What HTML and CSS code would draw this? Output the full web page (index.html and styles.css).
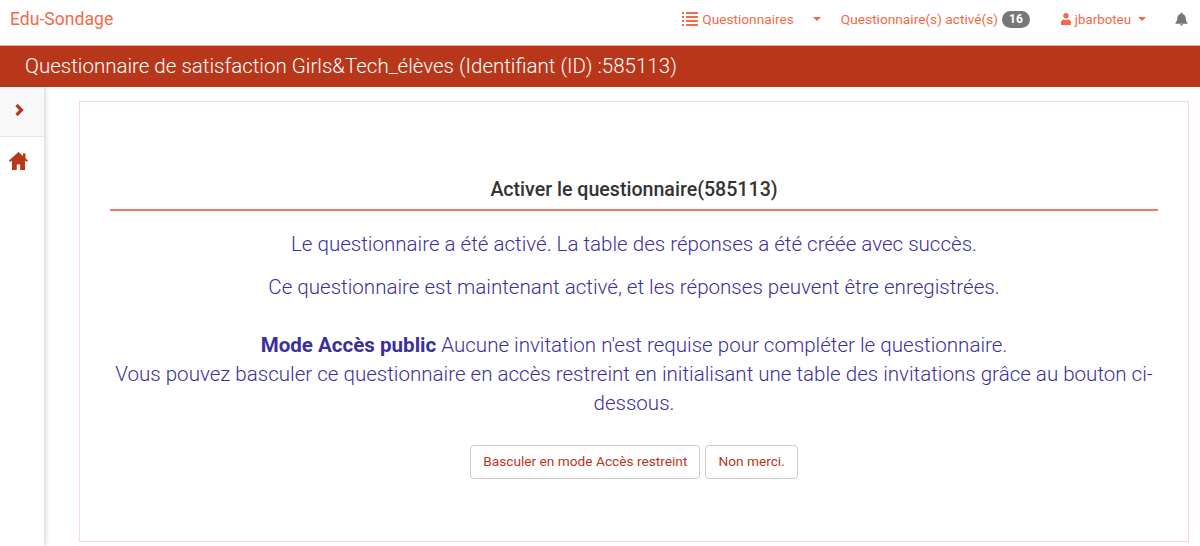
FILE: index.html
```html
<!DOCTYPE html>
<html lang="fr">
<head>
  <meta charset="UTF-8">
  <title>Edu-Sondage</title>
  <link rel="stylesheet" href="styles.css">
</head>
<body>
  <nav class="navbar">
    <a href="#" class="nav-logo">Edu-Sondage</a>
    <ul class="nav-links">
      <li class="nav-quest">
        <a href="#" class="nav-link">
          <svg class="icon-list" viewBox="0 0 16 14" width="16" height="14"><path d="M0 0h2v2H0zM4 0h12v2H4zM0 4h2v2H0zM4 4h12v2H4zM0 8h2v2H0zM4 8h12v2H4zM0 12h2v2H0zM4 12h12v2H4z" fill="currentColor"/></svg>
          Questionnaires
        </a>
        <span class="caret"></span>
      </li>
      <li class="nav-active">
        <a href="#" class="nav-link">Questionnaire(s) activé(s) <span class="badge">16</span></a>
      </li>
      <li class="nav-user">
        <a href="#" class="nav-link">
          <svg class="icon-user" viewBox="0 0 10 12" width="10" height="12"><circle cx="5" cy="2.800" r="2.700" fill="currentColor"/><path d="M0 12V9.400C0 7.600 1.200 6.600 2.600 6.400 4 7.300 6 7.300 7.400 6.400 8.800 6.600 10 7.600 10 9.400V12z" fill="currentColor"/></svg>
          jbarboteu
        </a>
        <span class="caret"></span>
      </li>
      <li class="nav-bell">
        <svg viewBox="0 0 14 14" width="13" height="14"><path d="M7 0c.6 0 1 .4 1 1v.6c2.200.4 3.600 2.200 3.600 4.400 0 3 .8 4 1.900 5.200.3.400 0 .9-.4.9H.9c-.4 0-.7-.5-.4-.9C1.600 10 2.400 9 2.400 6c0-2.200 1.400-4 3.600-4.400V1c0-.6.400-1 1-1zM5.300 12.700h3.400C8.700 13.500 8 14 7 14s-1.700-.5-1.700-1.300z" fill="currentColor"/></svg>
      </li>
    </ul>
  </nav>

  <header class="title-bar">Questionnaire de satisfaction Girls&amp;Tech_élèves (Identifiant (ID) :585113)</header>

  <div class="page">
    <aside class="sidebar">
      <div class="side-toggle">
        <svg viewBox="0 0 10 12" width="10" height="12"><path d="M2.500 1 7.500 6l-5 5" fill="none" stroke="currentColor" stroke-width="3.200"/></svg>
      </div>
      <div class="side-home">
        <svg viewBox="0 0 19 18" width="19" height="18"><path d="M9.500 0 14 4V1.500h2.500v4.700L19 8.500 17.800 10 16 8.400V18h-4.800v-5.500H7.800V18H3V8.400L1.200 10 0 8.500z" fill="currentColor"/></svg>
      </div>
    </aside>

    <main class="content">
      <section class="card">
        <h2>Activer le questionnaire(585113)</h2>
        <p class="msg">Le questionnaire a été activé. La table des réponses a été créée avec succès.</p>
        <p class="msg">Ce questionnaire est maintenant activé, et les réponses peuvent être enregistrées.</p>
        <p class="mode"><strong>Mode Accès public</strong> Aucune invitation n'est requise pour compléter le questionnaire.<br>
        Vous pouvez basculer ce questionnaire en accès restreint en initialisant une table des invitations grâce au bouton ci-dessous.</p>
        <div class="actions">
          <a href="#" class="btn">Basculer en mode Accès restreint</a>
          <a href="#" class="btn">Non merci.</a>
        </div>
      </section>
    </main>
  </div>
</body>
</html>
```

FILE: styles.css
```css
:root {
  --accent: #f4694a;
  --brick: #b8371a;
  --violet: #3b2f9e;
}
* {
  box-sizing: border-box;
}
html, body {
  height: 546px;
  overflow: hidden;
}
body {
  font-family: 'Roboto', sans-serif;
  margin: 0;
  background: #fff;
  color: #333;
}
a {
  text-decoration: none;
}
.navbar {
  display: flex;
  align-items: center;
  justify-content: space-between;
  height: 46px;
  padding: 0 12px 7px 10px;
  border-bottom: 1px solid #e9a595;
}
.nav-logo {
  font-size: 17.6px;
  color: var(--accent);
}
.nav-links {
  list-style: none;
  display: flex;
  align-items: center;
  margin: 0;
  padding: 0;
  font-size: 13.7px;
}
.nav-links li {
  display: flex;
  align-items: center;
}
.nav-link {
  color: var(--accent);
  display: flex;
  align-items: center;
}
.icon-list {
  margin-right: 4px;
}
.icon-user {
  margin-right: 4px;
}
.caret {
  width: 0;
  height: 0;
  border-top: 4px solid var(--accent);
  border-left: 4px solid transparent;
  border-right: 4px solid transparent;
  margin-left: 19px;
}
.nav-user .caret {
  margin-left: 7px;
}
.nav-active {
  margin-left: 20px;
}
.nav-user {
  margin-left: 31px;
  font-size: 13.3px;
}
.nav-bell {
  margin-left: 29px;
  color: #777;
}
.badge {
  background: #777;
  color: #fff;
  font-size: 12px;
  font-weight: 700;
  border-radius: 10px;
  padding: 2px 7px;
  margin-left: 4px;
  line-height: 13px;
}
.title-bar {
  background: var(--brick);
  color: #fff;
  height: 41px;
  line-height: 41px;
  padding-left: 25px;
  font-size: 20.53px;
  font-weight: 300;
}
.page {
  display: flex;
  height: 459px;
}
.sidebar {
  width: 44px;
  flex-shrink: 0;
  background: #fff;
  box-shadow: 2px 0 4px rgba(0,0,0,0.15);
  color: var(--brick);
}
.side-toggle {
  height: 50px;
  background: #f8f8f8;
  border-bottom: 1px solid #e7e7e7;
  padding: 14px 0 0 14px;
}
.side-home {
  padding: 15px 0 0 9px;
}
.content {
  flex: 1;
  padding: 14px 11px 4px 35px;
}
.card {
  height: 441px;
  border: 1px solid #fad9d0;
  padding: 76px 30px 0;
  text-align: center;
}
.card h2 {
  margin: 0 0 22px;
  padding-bottom: 7px;
  border-bottom: 2px solid #ef7a5f;
  font-size: 19.6px;
  font-weight: 500;
  line-height: 24px;
  color: #333;
}
.msg {
  margin: 0 0 20px;
  font-size: 20.55px;
  font-weight: 300;
  line-height: 23px;
  color: var(--violet);
}
.mode {
  margin: 32px 0 27px;
  font-size: 20.55px;
  font-weight: 300;
  line-height: 29px;
  color: var(--violet);
}
.mode strong {
  font-weight: 700;
}
.actions {
  display: flex;
  justify-content: center;
  gap: 5px;
}
.btn {
  display: block;
  padding: 6px 12px;
  height: 34px;
  font-size: 13.7px;
  line-height: 18px;
  color: var(--brick);
  background: #fff;
  border: 1px solid #ccc;
  border-radius: 4px;
}
```
